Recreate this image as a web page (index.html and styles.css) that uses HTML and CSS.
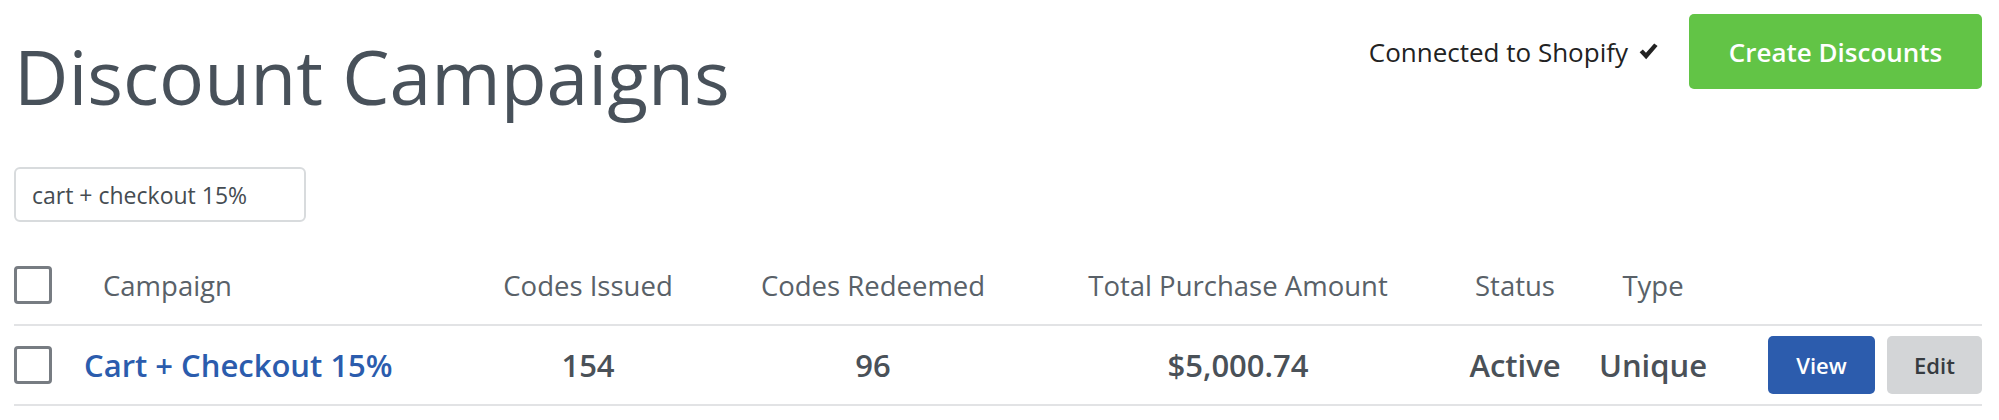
FILE: index.html
```html
<!DOCTYPE html>
<html lang="en">
<head>
<meta charset="utf-8">
<title>Discount Campaigns</title>
<link rel="stylesheet" href="styles.css">
</head>
<body>
<div class="page">
  <header class="topbar">
    <h1 class="title">Discount Campaigns</h1>
    <div class="top-actions">
      <span class="connected">Connected to Shopify
        <svg class="check" width="19" height="17" viewBox="0 0 18 16" aria-hidden="true"><path d="M0.6 8.8 L3.6 6.0 L6.6 9.2 L14.4 0.4 L17.6 2.8 L6.8 15.4 Z" fill="#222"/></svg>
      </span>
      <button class="btn btn-green">Create Discounts</button>
    </div>
  </header>

  <input class="search" type="text" value="cart + checkout 15%">

  <div class="table">
    <div class="row row-head">
      <span class="box"></span>
      <span class="cell cell-name head-name">Campaign</span>
      <span class="cell cell-center">Codes Issued</span>
      <span class="cell cell-center">Codes Redeemed</span>
      <span class="cell cell-center">Total Purchase Amount</span>
      <span class="cell cell-center">Status</span>
      <span class="cell cell-center">Type</span>
      <span class="cell"></span>
    </div>
    <div class="row row-data">
      <span class="box"></span>
      <a class="cell cell-name link" href="#">Cart + Checkout 15%</a>
      <span class="cell cell-center">154</span>
      <span class="cell cell-center">96</span>
      <span class="cell cell-center">$5,000.74</span>
      <span class="cell cell-center">Active</span>
      <span class="cell cell-center">Unique</span>
      <span class="cell cell-actions">
        <button class="btn btn-small btn-blue">View</button>
        <button class="btn btn-small btn-gray">Edit</button>
      </span>
    </div>
  </div>
</div>
</body>
</html>
```

FILE: styles.css
```css
* { box-sizing: border-box; }

body {
  margin: 0;
  background: #ffffff;
  font-family: "Open Sans", "Noto Sans", sans-serif;
}

.page {
  padding: 14px 17px 0 14px;
}

.topbar {
  display: flex;
  justify-content: space-between;
  align-items: flex-start;
}

.title {
  margin: 17px 0 0;
  font-size: 75px;
  line-height: 90px;
  font-weight: 400;
  color: #48515a;
}

.top-actions {
  display: flex;
  align-items: center;
  gap: 31px;
}

.connected {
  display: flex;
  align-items: center;
  gap: 11px;
  font-size: 26px;
  line-height: 34px;
  font-weight: 500;
  color: #222222;
}

.check { display: block; }

.btn {
  border: none;
  border-radius: 5px;
  font-family: "Open Sans", "Noto Sans", sans-serif;
  font-weight: 600;
  cursor: pointer;
}

.btn-green {
  width: 293px;
  height: 75px;
  background: #62c446;
  color: #ffffff;
  font-size: 26px;
}

.search {
  display: block;
  margin-top: 46px;
  width: 292px;
  height: 55px;
  padding: 0 0 0 16px;
  border: 2px solid #d8dbdd;
  border-radius: 6px;
  font-family: "Open Sans", "Noto Sans", sans-serif;
  font-size: 23px;
  color: #454c52;
  background: #fff;
  outline: none;
}

.table {
  margin-top: 24px;
}

.row {
  display: grid;
  grid-template-columns: 70px 382px 244px 326px 404px 150px 126px 1fr;
  align-items: center;
  height: 80px;
  border-bottom: 2px solid #e2e3e5;
}

.box {
  display: block;
  width: 38px;
  height: 38px;
  border: 3px solid #777c82;
  border-radius: 4px;
  background: #fff;
}

.cell-center { text-align: center; }

.row-head .cell {
  font-size: 27.5px;
  color: #596168;
  font-weight: 400;
}

.head-name { padding-left: 19px; }

.row-data .cell {
  font-size: 31px;
  font-weight: 600;
  color: #4a5158;
}

.row-data .link {
  color: #2b5cad;
  text-decoration: none;
}

.cell-actions {
  display: flex;
  justify-content: flex-end;
  gap: 12px;
}

.btn-small {
  height: 58px;
  font-size: 22px;
}

.btn-blue {
  width: 107px;
  background: #2c5cad;
  color: #ffffff;
}

.btn-gray {
  width: 95px;
  background: #d3d5d7;
  color: #363b40;
}
```
